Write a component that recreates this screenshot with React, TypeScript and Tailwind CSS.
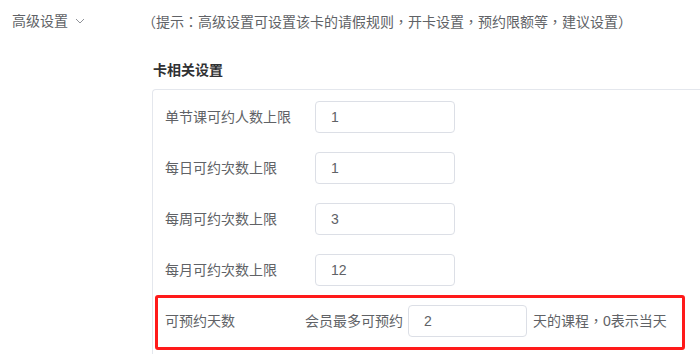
const rows = [
  { label: "单节课可约人数上限", value: "1" },
  { label: "每日可约次数上限", value: "1" },
  { label: "每周可约次数上限", value: "3" },
  { label: "每月可约次数上限", value: "12" },
];

export default function App() {
  return (
    <div className="h-[354px] w-[700px] overflow-hidden bg-white font-['Liberation_Sans','Noto_Sans_CJK_TC',sans-serif] text-[14px] text-[#606266] [text-spacing-trim:space-all]">
      {/* Header */}
      <div className="flex pt-[11px] leading-[20px]">
        <div className="flex w-[142px] items-center pl-[12px]">
          <span>高级设置</span>
          <svg width="10" height="6" viewBox="0 0 10 6" className="ml-[7px]" fill="none">
            <polyline points="1,1 5,5 9,1" stroke="#909399" strokeWidth="1" />
          </svg>
        </div>
        <span className="font-['Noto_Sans_CJK_TC',sans-serif]">
          （提示：高级设置可设置该卡的请假规则，开卡设置，预约限额等，建议设置）
        </span>
      </div>

      {/* Card settings */}
      <div className="ml-[153px]">
        <div className="mt-[29px] mb-[9px] font-bold leading-[20px] text-[#303133]">卡相关设置</div>
        <div className="-ml-px h-[300px] rounded-tl-[4px] border-l border-t border-[#e4e7ed] pt-[11px]">
          {rows.map((r) => (
            <div key={r.label} className="mb-[19px] flex h-[32px] items-center pl-[12px]">
              <span className="w-[150px]">{r.label}</span>
              <div className="flex h-[32px] w-[140px] items-center rounded-[4px] border border-[#dcdfe6] pl-[15px]">
                {r.value}
              </div>
            </div>
          ))}

          <div className="-mt-[10px] ml-[2px] flex w-[530px] items-center rounded-[3px] border-[3px] border-[#ff1a1a] pt-[7px] pb-[10px] pl-[7px]">
            <span className="w-[140px]">可预约天数</span>
            <span>会员最多可预约</span>
            <div className="ml-[5px] flex h-[32px] w-[119px] items-center rounded-[4px] border border-[#dcdfe6] pl-[15px]">
              2
            </div>
            <span className="ml-[6px]">
              天的课程<span className="font-['Noto_Sans_CJK_TC',sans-serif]">，</span>0表示当天
            </span>
          </div>
        </div>
      </div>
    </div>
  );
}
